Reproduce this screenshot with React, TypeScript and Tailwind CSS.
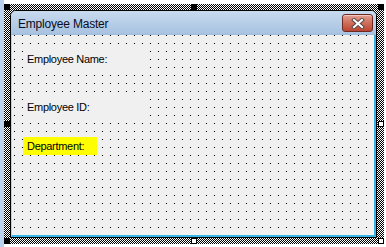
import React from 'react';

const handles = [
  { pos: 'left-0 top-0', filled: true },
  { pos: 'left-[187px] top-0', filled: true },
  { pos: 'left-[374px] top-0', filled: true },
  { pos: 'left-0 top-[117px]', filled: true },
  { pos: 'left-[374px] top-[117px]', filled: false },
  { pos: 'left-0 top-[234px]', filled: true },
  { pos: 'left-[187px] top-[234px]', filled: false },
  { pos: 'left-[374px] top-[234px]', filled: false },
];

function CloseButton() {
  return (
    <div className="w-[31px] h-[18px] rounded-[3px] border border-[#6e2a22] bg-linear-to-b from-[#e3a194] via-[#cf6d5a] to-[#b94532] flex items-center justify-center shadow-[inset_0_1px_0_rgba(255,255,255,0.45)]">
      <svg width="14" height="11" viewBox="0 0 14 11">
        <path d="M3 2 L11 9 M11 2 L3 9" stroke="#5b4a4a" strokeWidth="4" strokeLinecap="square" />
        <path d="M3 2 L11 9 M11 2 L3 9" stroke="#ffffff" strokeWidth="2" strokeLinecap="square" />
      </svg>
    </div>
  );
}

export default function App() {
  const labelCls = "h-[18px] flex items-center pl-[4px] text-[11px] tracking-[-0.3px] text-black";

  return (
    <div className="w-[386px] h-[247px] bg-white flex overflow-hidden font-['Liberation_Sans',Arial,sans-serif]">
      <div className="w-[4px] h-full bg-[#b9d1ea]" />

      <div className="relative mt-[4px] w-[380px] h-[240px] pl-[6px] pt-[6px] bg-[repeating-conic-gradient(#000_0%_25%,#fff_0%_50%)] bg-[length:2px_2px]">
        <div className="w-[367px] h-[228px] flex flex-col border border-black rounded-t-[6px] overflow-hidden bg-[#f0f0f0]">
          {/* title bar */}
          <div className="h-[24px] shrink-0 flex justify-between bg-linear-to-b from-[#c8dbef] to-[#a7c2e0] border-b border-[#9fb9d6]">
            <span className="pl-[7px] pt-[6px] text-[12px] leading-[14px] tracking-[-0.2px] text-[#0b0b1e]">
              Employee Master
            </span>
            <div className="pt-[3px] pr-[3px]">
              <CloseButton />
            </div>
          </div>

          {/* design surface */}
          <div className="flex-1 flex flex-col border-l border-[#b9d1ea] border-r-2 border-b-2 border-r-[#37b5e6] border-b-[#37b5e6] pl-[11px] bg-[conic-gradient(from_270deg_at_1px_1px,#000_90deg,#f0f0f0_0)] bg-[length:8px_8px] bg-[position:2px_0px]">
            <div className={`${labelCls} mt-[15px] w-[120px] bg-[#f0f0f0]`}>Employee Name:</div>
            <div className={`${labelCls} mt-[30px] w-[120px] bg-[#f0f0f0]`}>Employee ID:</div>
            <div className={`${labelCls} mt-[21px] w-[74px] bg-[#ffff00]`}>Department:</div>
          </div>
        </div>

        {handles.map((h, i) => (
          <div
            key={i}
            className={`absolute ${h.pos} w-[6px] h-[6px] ${h.filled ? 'bg-black' : 'bg-white border border-black'}`}
          />
        ))}
      </div>
    </div>
  );
}
